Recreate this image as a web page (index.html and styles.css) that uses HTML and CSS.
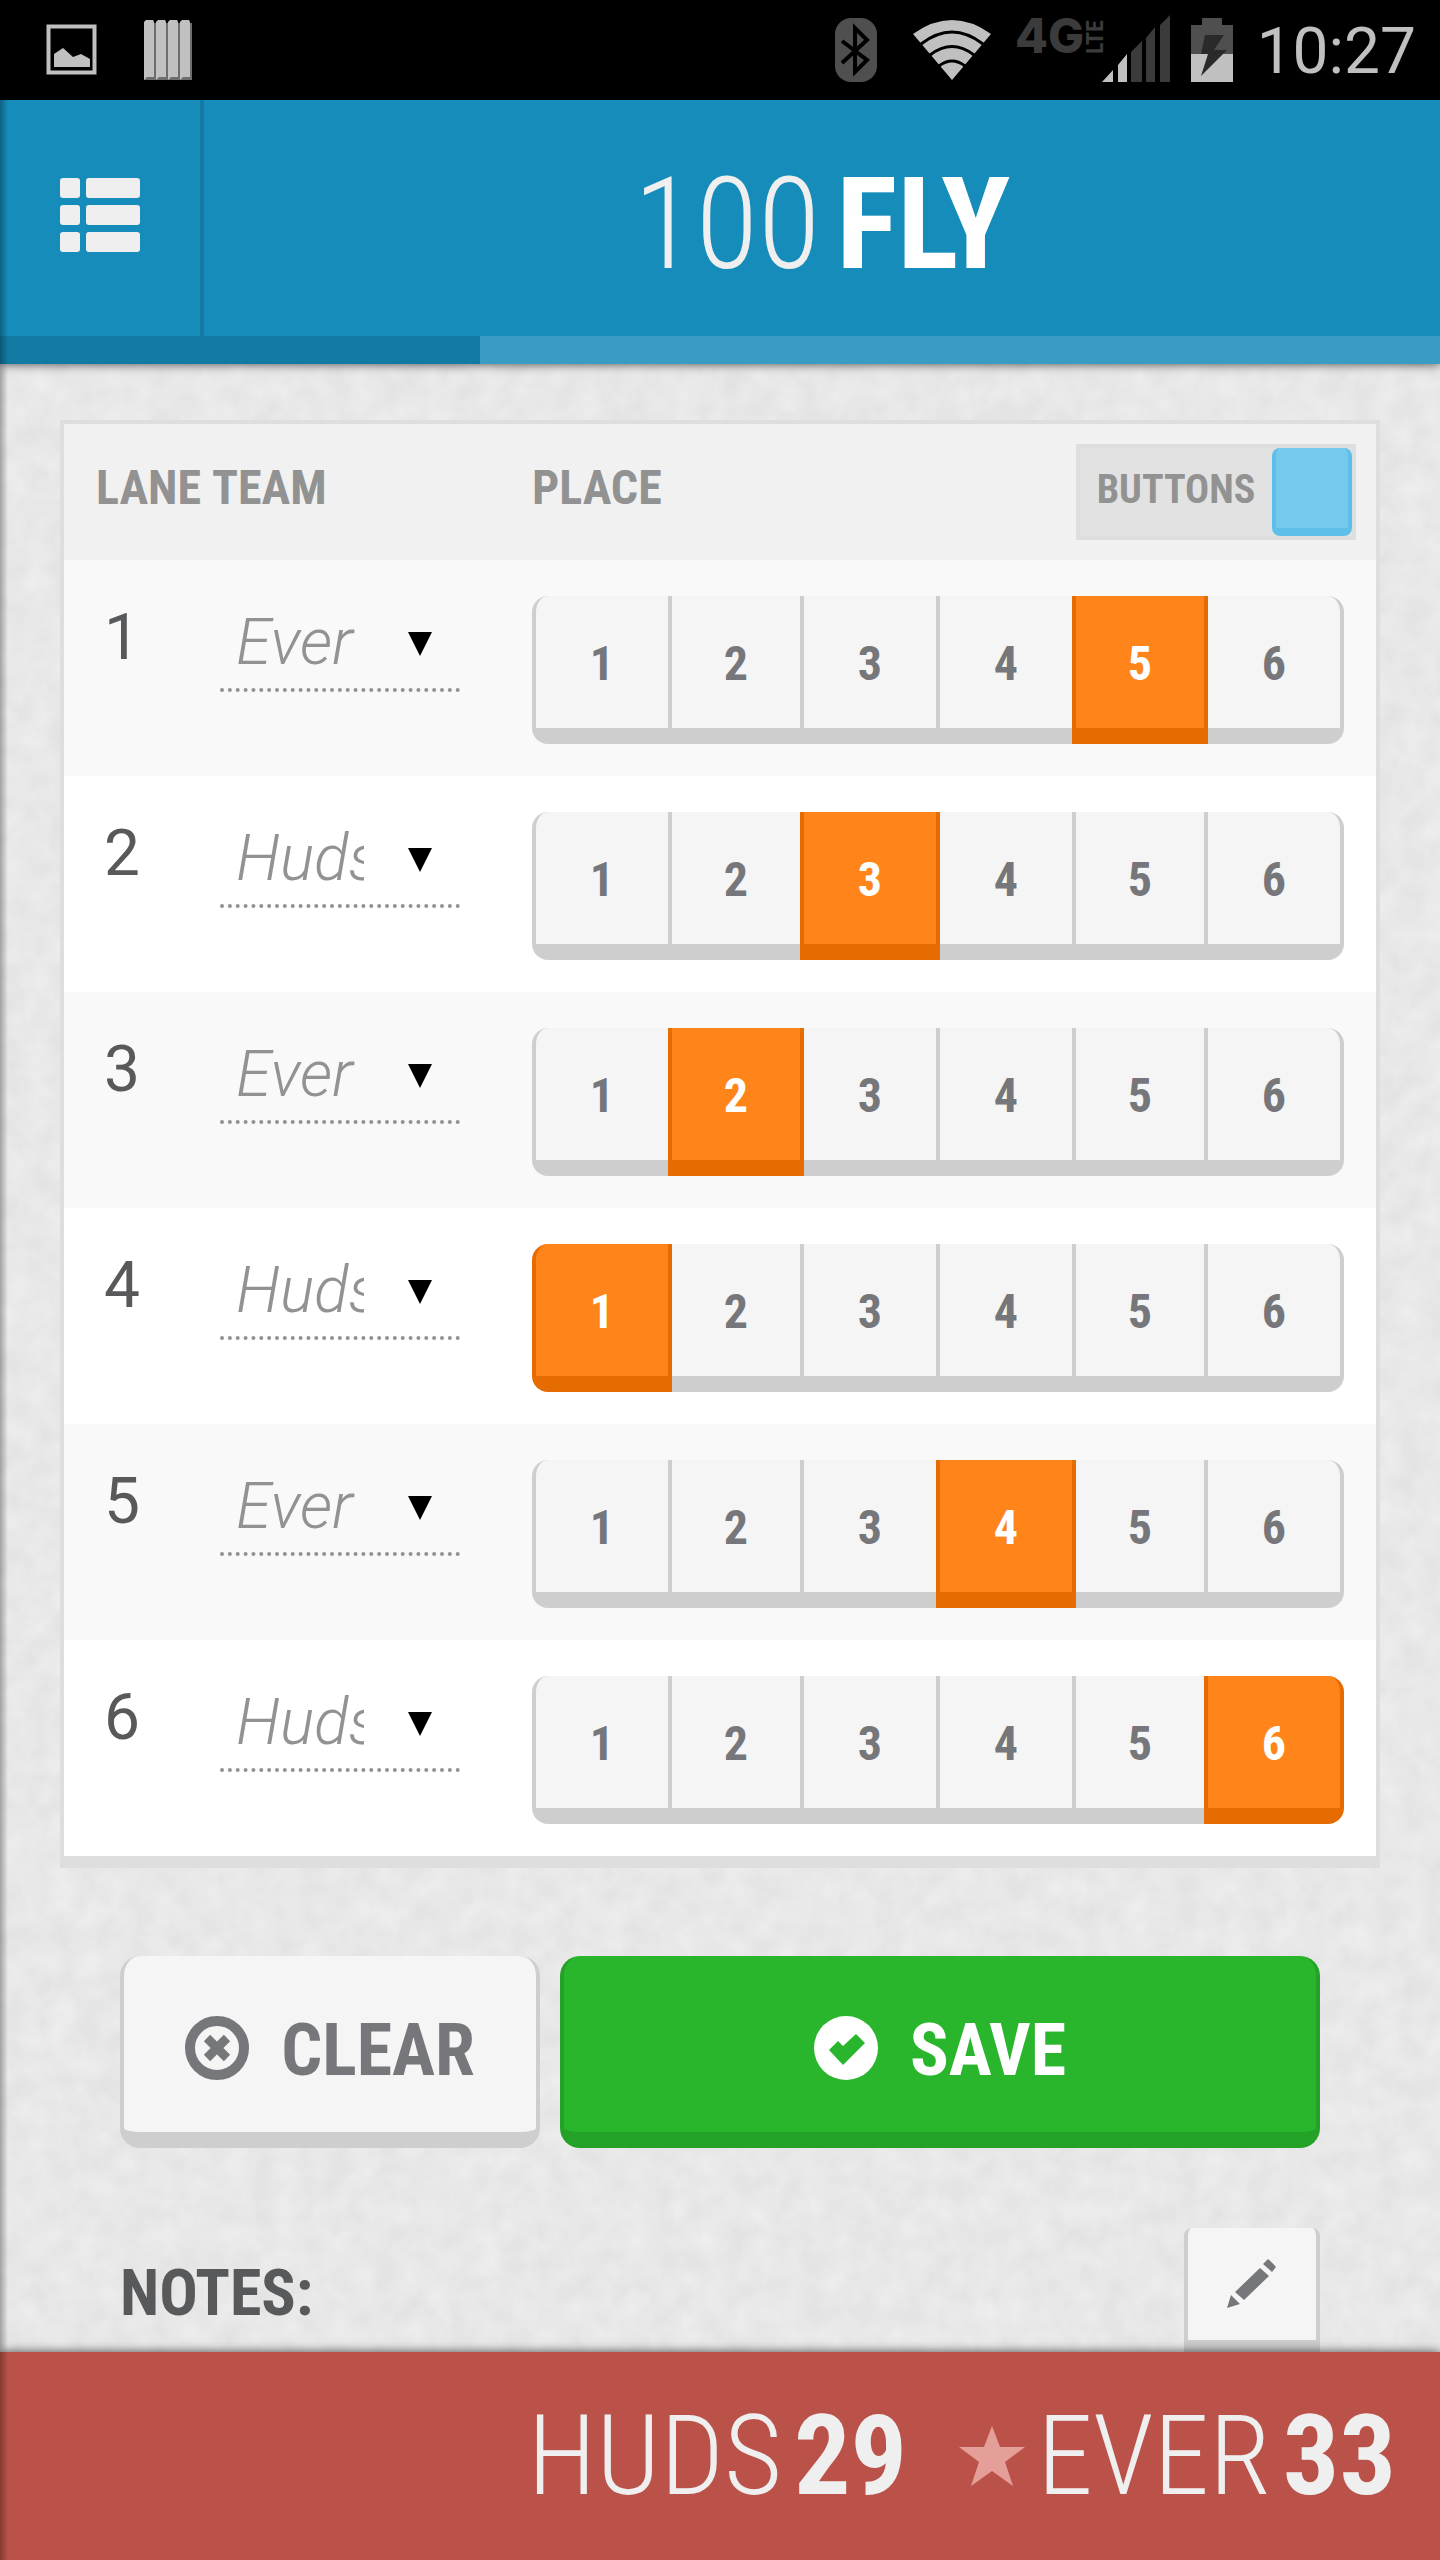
FILE: index.html
```html
<!DOCTYPE html>
<html lang="en">
<head>
<meta charset="utf-8">
<meta name="viewport" content="width=device-width, initial-scale=1">
<title>100 Fly</title>
<link rel="stylesheet" href="styles.css">
</head>
<body>
<svg class="paper" aria-hidden="true">
  <filter id="grain" x="0" y="0" width="100%" height="100%" color-interpolation-filters="sRGB">
    <feTurbulence type="fractalNoise" baseFrequency="0.04" numOctaves="3" seed="4"/>
    <feColorMatrix values="0.06 0 0 0 0.879  0.06 0 0 0 0.879  0.06 0 0 0 0.879  0 0 0 0 1"/>
  </filter>
  <rect width="100%" height="100%" filter="url(#grain)"/>
</svg>

<div class="status">
  <svg class="status-photo" width="52" height="52" viewBox="0 0 52 52" aria-hidden="true">
    <rect x="2.500" y="2.500" width="46" height="46" fill="none" stroke="#c0c0c0" stroke-width="4"/>
    <path d="M8 30l9-6 10 9 8-3 9 5v8H8z" fill="#c0c0c0"/>
  </svg>
  <svg width="48" height="60" viewBox="0 0 48 60" aria-hidden="true">
    <path d="M0 3h48v57H0z" fill="#6d6d6d"/>
    <path d="M0 2l2-2h7l1 2v55H3l-3 3zM12 2l2-2h7l1 2v55h-7l-3 3zM24 2l2-2h7l1 2v55h-7l-3 3zM36 2l2-2h7l1 2v55h-7l-3 3z" fill="#c0c0c0"/>
  </svg>
  <div class="status-right">
    <svg width="42" height="64" viewBox="0 0 42 64" aria-hidden="true">
      <rect width="42" height="64" rx="16" fill="#4f4f4f"/>
      <path d="M7 23l25 19-12 12V10l12 12L7 45" fill="none" stroke="#000" stroke-width="4"/>
    </svg>
    <svg class="status-wifi" width="78" height="60" viewBox="0 0 78 60" aria-hidden="true">
      <path d="M0 14Q39-14 78 14L39 60z" fill="#c0c0c0"/>
      <path d="M8 24Q39 0 70 24M17 35Q39 18 61 35M26 46Q39 36 52 46" fill="none" stroke="#000" stroke-width="3"/>
    </svg>
    <svg class="status-signal" width="156" height="100" viewBox="0 -16 156 100" aria-label="4G LTE">
      <text class="net" x="0" y="37">4G</text>
      <text class="lte" transform="translate(88 38) rotate(-90)">LTE</text>
      <path d="M87 66l11-12v12zM103 66V49l9-11v28z" fill="#c0c0c0"/>
      <path d="M116 66V36l11-11v41zM131 66V22l9-11v55zM145 66V9l10-10v67z" fill="#3b3b3b"/>
    </svg>
    <svg class="status-battery" width="42" height="64" viewBox="0 0 42 64" aria-hidden="true">
      <path d="M11 0h20v7h11v29H0V7h11z" fill="#4f4f4f"/>
      <path d="M0 36h42v28H0z" fill="#c0c0c0"/>
      <path d="M14 17h19L23 32h13L10 58l7-22H10z" fill="#2a2a2a"/>
    </svg>
    <time class="clock">10:27</time>
  </div>
</div>

<div class="app">
  <header class="header">
    <div class="bar">
      <button class="menu" type="button" aria-label="Events">
        <svg width="80" height="74" viewBox="0 0 80 74" fill="#efefef" aria-hidden="true">
          <rect width="20" height="20" rx="3"/><rect x="26" width="54" height="20" rx="3"/>
          <rect y="27" width="20" height="20" rx="3"/><rect x="26" y="27" width="54" height="20" rx="3"/>
          <rect y="54" width="20" height="20" rx="3"/><rect x="26" y="54" width="54" height="20" rx="3"/>
        </svg>
      </button>
      <h1 class="title"><span>100</span> <b>FLY</b></h1>
    </div>
    <div class="progress"><div class="progress-done"></div></div>
  </header>

  <main class="main">
    <table class="lanes">
      <colgroup><col class="col-lane"><col class="col-team"><col></colgroup>
      <thead>
        <tr>
          <th scope="col" class="th-lane">LANE</th>
          <th scope="col">TEAM</th>
          <th scope="col" class="th-place">
            <div class="place-head">
              <span>PLACE</span>
              <label class="toggle"><input type="checkbox" checked><span class="toggle-text">BUTTONS</span><span class="knob"></span></label>
            </div>
          </th>
        </tr>
      </thead>
      <tbody id="rows"></tbody>
    </table>

    <div class="actions">
      <button class="btn btn-clear" type="button">
        <svg width="64" height="64" viewBox="0 0 64 64" aria-hidden="true">
          <circle cx="32" cy="32" r="27" fill="none" stroke="currentColor" stroke-width="10"/>
          <path d="M22 22l20 20M42 22L22 42" stroke="currentColor" stroke-width="9"/>
        </svg>
        <span>CLEAR</span>
      </button>
      <button class="btn btn-save" type="button">
        <svg width="64" height="64" viewBox="0 0 64 64" aria-hidden="true">
          <circle cx="32" cy="32" r="32" fill="#fff"/>
          <path d="M15 34l9-9 5 5 13-12 9 9-22 22z" fill="#29b62d"/>
        </svg>
        <span>SAVE</span>
      </button>
    </div>

    <section class="notes">
      <h2 class="notes-title">NOTES:</h2>
      <button class="edit" type="button" aria-label="Edit notes">
        <svg width="50" height="50" viewBox="0 0 50 50" fill="#76777b" aria-hidden="true">
          <path d="M0 49l4-13 9 9zM8 33L33 9l9 8-25 24zM36 5l5-5q4 3 8 8l-4 5z"/>
        </svg>
      </button>
    </section>
  </main>

  <footer class="score">
    <span class="team"><span>HUDS</span> <b>29</b></span>
    <span class="team">
      <svg class="star" width="66" height="60" viewBox="0 0 66 60" aria-hidden="true"><path d="M33 0l8 21h25L46 36l8 24-21-15-21 15 8-24L0 21h25z" fill="#e39f98"/></svg>
      <span>EVER</span> <b>33</b>
    </span>
  </footer>
</div>
<script src="app.js"></script>
</body>
</html>
```
FILE: app.js
```js
// Each lane: the team that swims in it and the place it took.
const lanes = [['Ever', 5], ['Huds', 3], ['Ever', 2], ['Huds', 1], ['Ever', 4], ['Huds', 6]];

document.getElementById('rows').innerHTML = lanes.map(([team, place], i) => {
  const lane = i + 1;
  const options = ['Ever', 'Huds'].map(t => `<option${t === team ? ' selected' : ''}>${t}</option>`).join('');
  const places = [1, 2, 3, 4, 5, 6].map(p =>
    `<label class="place"><input type="radio" name="lane${lane}" value="${p}"${p === place ? ' checked' : ''}><span>${p}</span></label>`).join('');
  return `<tr>
    <td class="lane">${lane}</td>
    <td class="team-cell"><div class="picker">
      <select aria-label="Team in lane ${lane}">${options}</select>
      <svg width="24" height="24" viewBox="0 0 24 24" aria-hidden="true"><path d="M0 0h24L12 24z"/></svg>
    </div></td>
    <td class="place-cell"><div class="places" role="radiogroup" aria-label="Place of lane ${lane}">${places}</div></td>
  </tr>`;
}).join('');
```
FILE: styles.css
```css
* { box-sizing: border-box; }

body {
  margin: 0;
  min-height: 100vh;
  display: flex;
  flex-direction: column;
  background: #e8e8e8;
  font-family: "Roboto Condensed", Roboto, sans-serif;
  color: #58595b;
}

svg { flex: none; display: block; }
button { font: inherit; margin: 0; padding: 0; cursor: pointer; }

.paper {
  position: absolute;
  inset: 0;
  width: 100%;
  height: 100%;
  z-index: -1;
}

/* Status bar */
.status {
  display: flex;
  align-items: center;
  gap: 46px;
  height: 100px;
  padding: 0 24px 0 46px;
  background: #000;
}
.status-right { display: flex; align-items: center; margin-left: auto; }
.status-wifi { margin: 0 24px 0 36px; }
.status-battery { margin: 0 24px 0 20px; }
.net { font: 800 48px Inter, sans-serif; fill: #3b3b3b; }
.lte { font: 700 24px "Roboto Condensed", Roboto, sans-serif; fill: #3b3b3b; }
.clock { padding-top: 4px; font: 400 64px/96px Roboto, sans-serif; color: #c0c0c0; }

.app { position: relative; flex: 1; display: flex; flex-direction: column; }
.app::after {
  content: "";
  position: absolute;
  inset: 0 auto 0 0;
  width: 8px;
  background: linear-gradient(to right, rgba(0, 0, 0, .3), rgba(0, 0, 0, 0));
  pointer-events: none;
}

.header { box-shadow: 0 0 10px rgba(0, 0, 0, .7); }
.bar { display: flex; height: 236px; background: #168cbb; }
.menu {
  display: flex;
  align-items: center;
  width: 204px;
  padding: 0 0 6px 60px;
  border: 0;
  border-right: 4px solid #127aa3;
  background: none;
}
.title {
  flex: 1;
  display: flex;
  justify-content: center;
  gap: 16px;
  margin: 0;
  padding: 12px 0 0;
  font-size: 128px;
  line-height: 224px;
  font-weight: 300;
  color: #efefef;
}
.title b { font-weight: 700; color: #fff; }
.progress { height: 28px; background: #3a9cc5; }
.progress-done { width: 33.333%; height: 100%; background: #127aa3; }

.main { flex: 1; padding: 56px 60px 0; }

/* Lane table */
.lanes {
  width: 100%;
  table-layout: fixed;
  border-collapse: separate;
  border-spacing: 0;
  border: 4px solid #dedede;
  border-bottom-width: 12px;
  background: #fff;
}
.col-lane { width: 148px; }
.col-team { width: 320px; }
th {
  height: 136px;
  padding: 0 0 8px;
  background: #f1f1f1;
  font-size: 48px;
  line-height: 56px;
  font-weight: 700;
  color: #929292;
  text-align: left;
}
.lanes .th-lane { padding-left: 32px; }
.lanes .th-place { padding: 0 20px 0 0; }
.place-head { display: flex; align-items: center; justify-content: space-between; }
.place-head > span { padding-bottom: 8px; }

.toggle {
  display: flex;
  width: 280px;
  height: 96px;
  border: 4px solid #dedede;
  background: #e2e2e2;
  font-size: 40px;
  line-height: 84px;
  cursor: pointer;
}
.toggle input, .place input {
  position: absolute;
  opacity: 0;
  margin: 0;
}
.toggle-text { flex: 1; text-align: center; }
.knob {
  width: 80px;
  border: solid #5ebfe8;
  border-width: 0 4px 8px;
  border-radius: 8px;
  background: #75c9ec;
}

td { padding: 36px 0 32px; vertical-align: top; }
tbody tr:nth-child(odd) { background: #f9f9f9; }
.lane { padding-left: 40px; font-family: Roboto, sans-serif; font-size: 64px; line-height: 84px; }
.team-cell { padding-left: 8px; }
.place-cell { padding-right: 32px; }

.picker {
  display: grid;
  grid-template-columns: 100%;
  width: 240px;
  height: 96px;
  border-bottom: 4px dotted #929292;
}
.picker > * { grid-area: 1 / 1; }
.picker select {
  appearance: none;
  width: 100%;
  margin: 0;
  padding: 0 96px 0 16px;
  border: 0;
  background: none;
  font: italic 300 64px Roboto, sans-serif;
  color: #929292;
}
.picker svg { align-self: center; justify-self: end; margin: 4px 28px 0 0; pointer-events: none; }

.places {
  display: grid;
  grid-template-columns: 34fr 33fr 34fr 34fr 33fr 35fr;
  height: 148px;
}
.place { display: flex; margin-right: -4px; cursor: pointer; }
.place:last-child { margin-right: 0; }
.place span {
  flex: 1;
  padding-top: 4px;
  border: solid #cecece;
  border-width: 0 4px 16px;
  background: #f5f5f5;
  font-size: 48px;
  line-height: 128px;
  font-weight: 700;
  color: #76777b;
  text-align: center;
}
.place:first-child span { border-radius: 16px 0 0 16px; }
.place:last-child span { border-radius: 0 16px 16px 0; }
.place input:checked + span {
  position: relative;
  border-color: #e66b00;
  background: #ff851b;
  color: #fff;
}

/* Clear and save */
.actions { display: grid; grid-template-columns: 21fr 38fr; gap: 20px; margin: 88px 60px 80px; }
.btn {
  display: flex;
  align-items: center;
  justify-content: center;
  gap: 32px;
  height: 192px;
  padding-top: 8px;
  border: solid;
  border-width: 0 4px 16px;
  border-radius: 20px;
  font-size: 72px;
  line-height: 80px;
  font-weight: 700;
}
.btn span { padding-top: 6px; }
.btn-clear { border-color: #cecece; background: #f5f5f5; color: #76777b; }
.btn-save { border-color: #24a228; background: #29b62d; color: #fff; }

.notes { display: flex; justify-content: space-between; margin: 0 60px; }
.notes-title { margin: 0; padding-top: 8px; font-size: 64px; line-height: 116px; font-weight: 700; }
.edit {
  display: flex;
  align-items: center;
  justify-content: center;
  width: 136px;
  height: 124px;
  border: solid #cecece;
  border-width: 0 4px 12px;
  border-radius: 8px 8px 0 0;
  background: #f5f5f5;
}

/* Score */
.score {
  display: flex;
  align-items: center;
  justify-content: flex-end;
  gap: 52px;
  height: 208px;
  padding-right: 44px;
  background: #bb5249;
  box-shadow: 0 0 10px rgba(0, 0, 0, .7);
  font-size: 112px;
  line-height: 132px;
  font-weight: 300;
  color: #efefef;
}
.team { display: flex; align-items: center; gap: 12px; }
.team b { font-weight: 700; }
```
